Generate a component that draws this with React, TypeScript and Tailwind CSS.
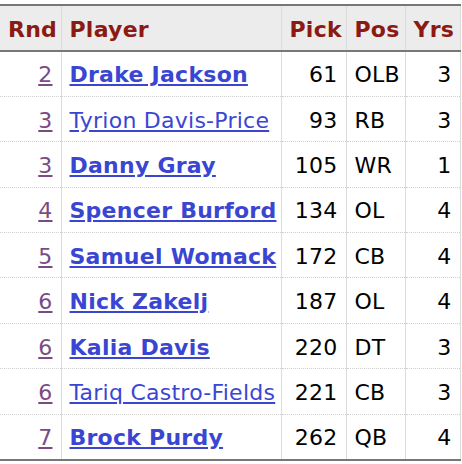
import React from "react";

type Pick = {
  rnd: number;
  name: string;
  bold: boolean;
  pick: number;
  pos: string;
  yrs: number;
};

const picks: Pick[] = [
  { rnd: 2, name: "Drake Jackson", bold: true, pick: 61, pos: "OLB", yrs: 3 },
  { rnd: 3, name: "Tyrion Davis-Price", bold: false, pick: 93, pos: "RB", yrs: 3 },
  { rnd: 3, name: "Danny Gray", bold: true, pick: 105, pos: "WR", yrs: 1 },
  { rnd: 4, name: "Spencer Burford", bold: true, pick: 134, pos: "OL", yrs: 4 },
  { rnd: 5, name: "Samuel Womack", bold: true, pick: 172, pos: "CB", yrs: 4 },
  { rnd: 6, name: "Nick Zakelj", bold: true, pick: 187, pos: "OL", yrs: 4 },
  { rnd: 6, name: "Kalia Davis", bold: true, pick: 220, pos: "DT", yrs: 3 },
  { rnd: 6, name: "Tariq Castro-Fields", bold: false, pick: 221, pos: "CB", yrs: 3 },
  { rnd: 7, name: "Brock Purdy", bold: true, pick: 262, pos: "QB", yrs: 4 },
];

export default function App() {
  return (
    <div className="w-[462px] h-[464px] bg-white pt-1 font-['DejaVu_Sans',Verdana,sans-serif] text-[22px] tracking-[0.25px] text-black">
      <table className="w-[460px] border-collapse table-fixed">
        <colgroup>
          <col className="w-[61px]" />
          <col className="w-[220px]" />
          <col className="w-[65px]" />
          <col className="w-[59px]" />
          <col className="w-[55px]" />
        </colgroup>
        <thead>
          <tr className="h-[46px] bg-[#ececec] border-t-2 border-b-2 border-[#777] text-[#8b1a12] font-bold">
            <th className="px-2 pt-[3px] text-right border-r border-[#dcdcdc]">Rnd</th>
            <th className="px-2 pt-[3px] text-left border-r border-[#dcdcdc]">Player</th>
            <th className="px-2 pt-[3px] text-right border-r border-[#dcdcdc]">Pick</th>
            <th className="px-2 pt-[3px] text-left border-r border-[#dcdcdc]">Pos</th>
            <th className="px-2 pt-[3px] text-right border-r border-[#dcdcdc]">Yrs</th>
          </tr>
        </thead>
        <tbody className="border-b-2 border-[#777]">
          {picks.map((p, i) => (
            <tr
              key={p.name}
              className={`h-[45.4px] ${i < picks.length - 1 ? "border-b border-dotted border-[#cfcfcf]" : ""}`}
            >
              <td className="px-2 pt-[2px] text-right border-r border-[#dcdcdc]">
                <a href="#" className="text-[#7b4a86] underline underline-offset-2">
                  {p.rnd}
                </a>
              </td>
              <td className="px-2 pt-[2px] text-left border-r border-[#dcdcdc] whitespace-nowrap">
                <a
                  href="#"
                  className={`text-[#3a46d2] underline underline-offset-2 ${p.bold ? "font-bold" : ""}`}
                >
                  {p.name}
                </a>
              </td>
              <td className="px-2 pt-[2px] text-right border-r border-[#dcdcdc]">{p.pick}</td>
              <td className="px-2 pt-[2px] text-left border-r border-[#dcdcdc]">{p.pos}</td>
              <td className="px-2 pt-[2px] text-right border-r border-[#dcdcdc]">{p.yrs}</td>
            </tr>
          ))}
        </tbody>
      </table>
    </div>
  );
}
